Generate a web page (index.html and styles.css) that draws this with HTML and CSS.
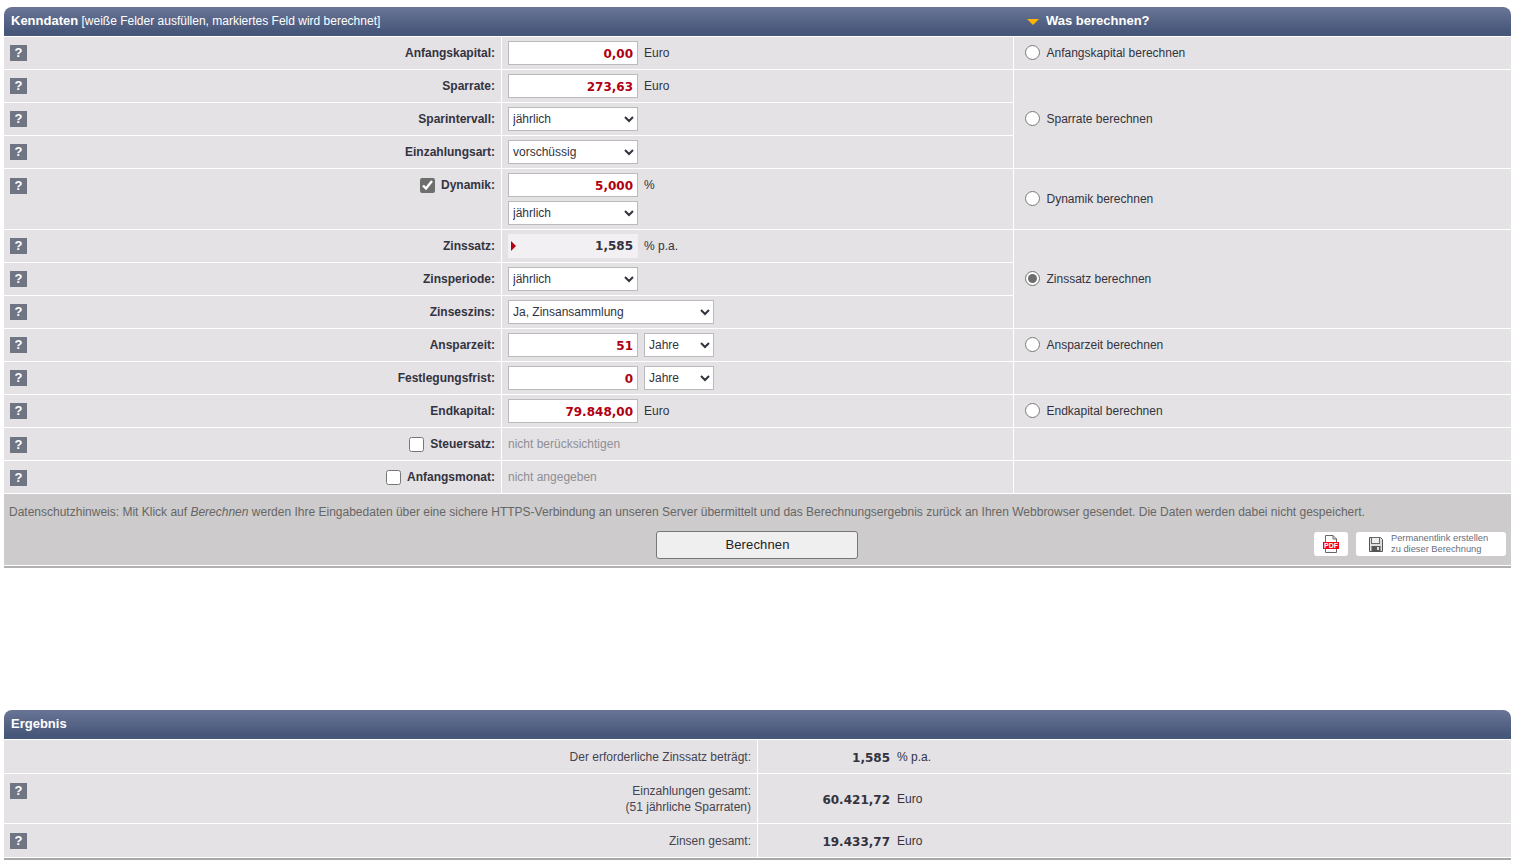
FILE: index.html
```html
<!DOCTYPE html>
<html lang="de">
<head>
<meta charset="utf-8">
<title>Sparrechner</title>
<link rel="stylesheet" href="styles.css">
</head>
<body>
<section class="panel">
  <div class="head">
    <div class="head-left"><b>Kenndaten</b> [weiße Felder ausfüllen, markiertes Feld wird berechnet]</div>
    <div class="head-right"><span class="tri"></span><b>Was berechnen?</b></div>
  </div>
  <table class="form">
    <colgroup><col class="c1"><col class="c2"><col class="c3"></colgroup>
    <tr>
      <td class="lab"><div class="lw"><span class="help">?</span><label>Anfangskapital:</label></div></td>
      <td class="inp"><div class="iw"><input class="num" value="0,00"><span class="unit">Euro</span></div></td>
      <td class="rad"><label class="rl"><input type="radio" name="w">Anfangskapital berechnen</label></td>
    </tr>
    <tr>
      <td class="lab"><div class="lw"><span class="help">?</span><label>Sparrate:</label></div></td>
      <td class="inp"><div class="iw"><input class="num" value="273,63"><span class="unit">Euro</span></div></td>
      <td class="rad" rowspan="3"><label class="rl"><input type="radio" name="w">Sparrate berechnen</label></td>
    </tr>
    <tr>
      <td class="lab"><div class="lw"><span class="help">?</span><label>Sparintervall:</label></div></td>
      <td class="inp"><div class="iw"><select class="sel"><option>jährlich</option></select></div></td>
    </tr>
    <tr>
      <td class="lab"><div class="lw"><span class="help">?</span><label>Einzahlungsart:</label></div></td>
      <td class="inp"><div class="iw"><select class="sel"><option>vorschüssig</option></select></div></td>
    </tr>
    <tr>
      <td class="lab"><div class="lw"><span class="help help-low">?</span><label class="chk"><input type="checkbox" checked>Dynamik:</label></div></td>
      <td class="inp"><div class="iw"><input class="num" value="5,000"><span class="unit unit-up">%</span></div><div class="iw iw2"><select class="sel"><option>jährlich</option></select></div></td>
      <td class="rad"><label class="rl"><input type="radio" name="w">Dynamik berechnen</label></td>
    </tr>
    <tr>
      <td class="lab"><div class="lw"><span class="help">?</span><label>Zinssatz:</label></div></td>
      <td class="inp"><div class="iw"><div class="calc"><span class="mark"></span>1,585</div><span class="unit">% p.a.</span></div></td>
      <td class="rad" rowspan="3"><label class="rl"><input type="radio" name="w" checked>Zinssatz berechnen</label></td>
    </tr>
    <tr>
      <td class="lab"><div class="lw"><span class="help">?</span><label>Zinsperiode:</label></div></td>
      <td class="inp"><div class="iw"><select class="sel"><option>jährlich</option></select></div></td>
    </tr>
    <tr>
      <td class="lab"><div class="lw"><span class="help">?</span><label>Zinseszins:</label></div></td>
      <td class="inp"><div class="iw"><select class="sel wide"><option>Ja, Zinsansammlung</option></select></div></td>
    </tr>
    <tr>
      <td class="lab"><div class="lw"><span class="help">?</span><label>Ansparzeit:</label></div></td>
      <td class="inp"><div class="iw"><input class="num" value="51"><select class="sel small"><option>Jahre</option></select></div></td>
      <td class="rad"><label class="rl"><input type="radio" name="w">Ansparzeit berechnen</label></td>
    </tr>
    <tr>
      <td class="lab"><div class="lw"><span class="help">?</span><label>Festlegungsfrist:</label></div></td>
      <td class="inp"><div class="iw"><input class="num" value="0"><select class="sel small"><option>Jahre</option></select></div></td>
      <td class="rad"></td>
    </tr>
    <tr>
      <td class="lab"><div class="lw"><span class="help">?</span><label>Endkapital:</label></div></td>
      <td class="inp"><div class="iw"><input class="num" value="79.848,00"><span class="unit">Euro</span></div></td>
      <td class="rad"><label class="rl"><input type="radio" name="w">Endkapital berechnen</label></td>
    </tr>
    <tr>
      <td class="lab"><div class="lw"><span class="help help-low">?</span><label class="chk"><input type="checkbox">Steuersatz:</label></div></td>
      <td class="inp"><div class="iw"><span class="muted">nicht berücksichtigen</span></div></td>
      <td class="rad"></td>
    </tr>
    <tr>
      <td class="lab"><div class="lw"><span class="help help-low">?</span><label class="chk"><input type="checkbox">Anfangsmonat:</label></div></td>
      <td class="inp"><div class="iw"><span class="muted">nicht angegeben</span></div></td>
      <td class="rad"></td>
    </tr>
  </table>
  <div class="foot">
    <p class="note">Datenschutzhinweis: Mit Klick auf <i>Berechnen</i> werden Ihre Eingabedaten über eine sichere HTTPS-Verbindung an unseren Server übermittelt und das Berechnungsergebnis zurück an Ihren Webbrowser gesendet. Die Daten werden dabei nicht gespeichert.</p>
    <div class="actions">
      <button class="go" type="button">Berechnen</button>
      <div class="tools">
        <a class="tool pdf" href="#" aria-label="PDF">
          <svg width="18" height="18" viewBox="0 0 18 18"><path d="M3.5 .5H11L14.5 4V17.5H3.5Z" fill="#fff" stroke="#666"/><path d="M11 .5V4H14.5" fill="none" stroke="#666"/><rect x="1" y="7" width="16" height="7" fill="#f00010"/><text x="9" y="13" class="pdft" text-anchor="middle">PDF</text></svg>
        </a>
        <a class="tool perma" href="#">
          <svg width="14" height="15" viewBox="0 0 14 15"><path d="M.5 .5H11.5L13.5 2.5V14.5H.5Z" fill="#ddd" stroke="#555"/><rect x="2.500" y=".5" width="8" height="6" fill="#eee" stroke="#666"/><rect x="2.500" y="9" width="9" height="5.500" fill="#555"/><rect x="8" y="10" width="2" height="3" fill="#ddd"/></svg>
          <span>Permanentlink erstellen<br>zu dieser Berechnung</span>
        </a>
      </div>
    </div>
  </div>
</section>

<section class="panel result">
  <div class="head head-res"><b>Ergebnis</b></div>
  <table class="form res">
    <colgroup><col class="r1"><col class="r2"></colgroup>
    <tr class="r-a">
      <td class="rlab"><div class="rw"><span></span><span class="rt">Der erforderliche Zinssatz beträgt:</span></div></td>
      <td class="rval"><div class="vw"><b>1,585</b><span>% p.a.</span></div></td>
    </tr>
    <tr class="r-b">
      <td class="rlab"><div class="rw"><span class="help">?</span><span class="rt">Einzahlungen gesamt:<br>(51 jährliche Sparraten)</span></div></td>
      <td class="rval"><div class="vw"><b>60.421,72</b><span>Euro</span></div></td>
    </tr>
    <tr class="r-a">
      <td class="rlab"><div class="rw"><span class="help">?</span><span class="rt">Zinsen gesamt:</span></div></td>
      <td class="rval"><div class="vw"><b>19.433,77</b><span>Euro</span></div></td>
    </tr>
  </table>
  <div class="endline"></div>
</section>
</body>
</html>
```
FILE: styles.css
```css
* { box-sizing: border-box; }
html, body { margin: 0; padding: 0; background: #fff; }
body { padding: 7px 0 7px 4px; font: 12px/15px "Liberation Sans", Arial, sans-serif; color: #333340; overflow: hidden; }
.panel { width: 1507px; }
.result { margin-top: 142px; }

.head { height: 30px; display: flex; align-items: center; color: #fff; font-size: 12px; background: linear-gradient(#6a7596, #47577a 85%); border-radius: 8px 8px 0 0; border-bottom: 1px solid #fff; }
.head b { font-size: 13px; }
.head-left { width: 1009px; padding: 0 0 1px 7px; }
.head-right { display: flex; align-items: center; padding-bottom: 3px; }
.head-res { padding: 0 0 2px 7px; }
.tri { width: 0; height: 0; margin: 3px 7px 0 14px; border-style: solid; border-width: 6px 6px 0; border-color: #ffb400 transparent transparent; }

.form { width: 1507px; border-collapse: separate; border-spacing: 0; table-layout: fixed; }
.c1 { width: 497px; }
.c2 { width: 512px; }
.form td { background: #e4e2e5; border-bottom: 1px solid #fff; padding: 0; vertical-align: top; }
.inp, .rad, .rval { border-left: 1px solid #fff; }

.lw { height: 32px; display: flex; justify-content: space-between; align-items: flex-start; padding: 8px 6px 0 6px; }
.lw label { font-weight: bold; display: flex; align-items: center; height: 16px; }
.help { width: 17px; height: 16px; background: #6f7583; color: #fff; font: bold 13px/16px "Liberation Sans", Arial, sans-serif; text-align: center; display: block; flex: none; }
.help-low { margin-top: 1px; }
.chk input { width: 15px; height: 15px; margin: 0 6px 0 0; accent-color: #6e6e6e; }

.iw { display: flex; align-items: center; gap: 6px; padding: 4px 0 0 6px; height: 28px; }
.iw2 { height: 24px; padding-top: 0; margin-top: 4px; margin-bottom: 4px; }
.num { width: 130px; height: 24px; border: 1px solid #bbb; background: #fff; padding: 1px 4px 0 0; text-align: right; font: bold 12px "DejaVu Sans", Verdana, sans-serif; color: #b00012; outline: 0; }
.sel { width: 130px; height: 24px; border: 1px solid #bbb; border-radius: 0; background-color: #fff; padding: 0; font: 12px "Liberation Sans", Arial, sans-serif; color: #333340; }
.wide { width: 206px; }
.small { width: 70px; }
.unit { padding-top: 0; }
.unit-up { align-self: center; }
.calc { width: 130px; height: 24px; background: #f2f0f3; padding-right: 5px; text-align: right; font: bold 12px/25px "DejaVu Sans", Verdana, sans-serif; color: #333340; position: relative; }
.mark { position: absolute; left: 3px; top: 7px; width: 0; height: 0; border-style: solid; border-width: 5px 0 5px 5px; border-color: transparent transparent transparent #b00012; }
.muted { color: #8e8e94; }

.rad { vertical-align: middle !important; }
.rl { display: flex; align-items: center; padding-left: 11px; }
.rl input { width: 15px; height: 15px; margin: -1px 6.5px 1px 0; accent-color: #6e6e6e; }

.foot { height: 72px; background: #cdcbcb; }
.note { margin: 0; padding: 11px 0 0 5px; height: 37px; color: #666; }
.actions { height: 35px; position: relative; display: flex; justify-content: flex-start; padding-left: 652px; }
.go { width: 202px; height: 28px; border: 1px solid #777; border-radius: 3px; background: #efefef; color: #222; font: 13px/24px "Liberation Sans", Arial, sans-serif; letter-spacing: .15px; padding: 0 0 1px 1px; }
.tools { position: absolute; right: 5px; top: 1px; display: flex; gap: 8px; }
.tool { height: 24px; background: #fff; border-radius: 3px; display: flex; align-items: center; text-decoration: none; }
.pdf { width: 34px; justify-content: center; }
.pdft { font: bold 7px "Liberation Sans", Arial, sans-serif; fill: #fff; }
.perma { width: 150px; padding-left: 13px; gap: 8px; color: #666e7c; font-size: 9.3px; line-height: 11px; }
.panel:first-child { border-bottom: 2px solid #b0b0b0; }
.panel:first-child .foot { border-bottom: 1px solid #fff; }

.r1 { width: 753px; }
.r-a .rw, .r-a .vw { height: 33px; }
.r-b .rw, .r-b .vw { height: 49px; }
.rw { display: flex; justify-content: space-between; align-items: flex-start; padding: 9px 6px 0 6px; }
.rt { text-align: right; line-height: 16px; color: #444450; }
.vw { display: flex; align-items: center; padding-top: 2px; }
.vw b { width: 132px; text-align: right; font: bold 12px "DejaVu Sans", Verdana, sans-serif; color: #333340; }
.vw span { margin-left: 7px; }
.endline { height: 2px; background: #a8a8a8; }
```
